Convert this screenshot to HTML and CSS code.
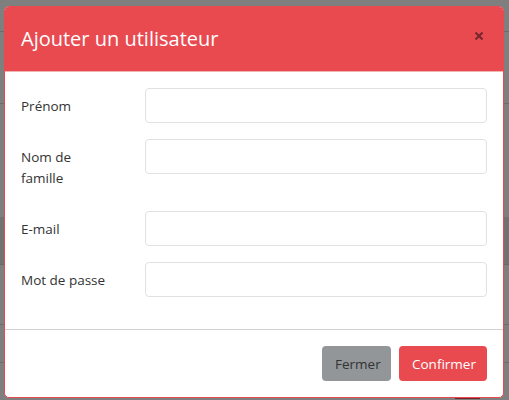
FILE: index.html
```html
<!DOCTYPE html>
<html lang="fr">
<head>
<meta charset="utf-8">
<title>Ajouter un utilisateur</title>
<link rel="stylesheet" href="styles.css">
</head>
<body>
<div class="page">
  <div class="page-top"></div>
  <div class="page-row tall"></div>
  <div class="page-gap"></div>
  <div class="page-band"></div>
  <div class="page-row mid"></div>
  <div class="page-row small"></div>
  <div class="page-end"><span class="page-btn"></span></div>
</div>
<div class="backdrop">
  <div class="modal">
    <div class="modal-header">
      <h5 class="modal-title">Ajouter un utilisateur</h5>
      <button class="close" type="button" aria-label="Close">
        <svg width="10" height="10" viewBox="0 0 10 10"><path d="M1.5 1.5L8.5 8.5M8.5 1.5L1.5 8.5" stroke="currentColor" stroke-width="2" fill="none"/></svg>
      </button>
    </div>
    <div class="modal-body">
      <div class="form-row">
        <label class="form-label">Prénom</label>
        <input class="form-input" type="text">
      </div>
      <div class="form-row">
        <label class="form-label">Nom de<br>famille</label>
        <input class="form-input" type="text">
      </div>
      <div class="form-row">
        <label class="form-label">E-mail</label>
        <input class="form-input" type="email">
      </div>
      <div class="form-row">
        <label class="form-label">Mot de passe</label>
        <input class="form-input" type="password">
      </div>
    </div>
    <div class="modal-footer">
      <button class="btn btn-secondary" type="button">Fermer</button>
      <button class="btn btn-primary" type="button">Confirmer</button>
    </div>
  </div>
</div>
</body>
</html>
```
FILE: styles.css
```css
* { box-sizing: border-box; }
html, body { margin: 0; padding: 0; }
body {
  width: 509px;
  height: 400px;
  overflow: hidden;
  background: #fff;
  font-family: "Open Sans", "Noto Sans", sans-serif;
}
.page { width: 509px; height: 400px; }
.page-top { height: 32px; border-bottom: 1px solid #d6d6d6; }
.page-row { border-bottom: 1px solid #dadada; }
.page-row.tall { height: 72px; }
.page-gap { height: 113px; }
.page-band { height: 48px; background: #e4e4e4; border-bottom: 1px solid #d0d0d0; }
.page-row.mid { height: 60px; }
.page-row.small { height: 38px; }
.page-end { height: 36px; display: flex; justify-content: flex-end; align-items: flex-end; padding-right: 29px; }
.page-btn { width: 25px; height: 3px; background: #e84a50; }

.backdrop {
  position: fixed;
  inset: 0;
  background: rgba(0, 0, 0, 0.5);
  padding: 6px 5px 0 4px;
}
.modal {
  width: 500px;
  background: #fff;
  border: 1px solid #e84a50;
  border-radius: 5px;
  overflow: hidden;
}
.modal-header {
  background: #e84a50;
  height: 65px;
  padding: 0 16px;
  display: flex;
  align-items: center;
  justify-content: space-between;
  border-bottom: 1px solid #f2b3b5;
}
.modal-title {
  margin: 0;
  color: #fff;
  font-weight: 400;
  font-size: 20px;
  line-height: 32px;
  padding-bottom: 1px;
}
.close {
  background: none;
  border: 0;
  padding: 0;
  margin: 0 3px 6px 0;
  color: #74282c;
  width: 10px;
  height: 10px;
  display: flex;
}
.modal-body {
  padding: 16px 16px 16px;
  border-bottom: 1px solid #d2d2d2;
}
.form-row {
  display: grid;
  grid-template-columns: 109px 1fr;
  column-gap: 15px;
  align-items: start;
  margin-bottom: 16px;
}
.form-label {
  font-size: 13.5px;
  line-height: 21px;
  color: #333;
  padding: 8px 0 6px;
}
.form-input {
  height: 35px;
  border: 1px solid #e1e1e1;
  border-radius: 4px;
  background: #fff;
  font: inherit;
}
.modal-footer {
  display: flex;
  justify-content: flex-end;
  gap: 8px;
  padding: 16px 16px 16px 16px;
}
.btn {
  height: 35px;
  border: 0;
  border-radius: 4px;
  font-family: inherit;
  font-size: 13.5px;
  padding: 0 13px;
}
.btn-secondary { background: #929699; color: #333; width: 69px; }
.btn-primary { background: #e84a50; color: #fff; width: 88px; }
```
